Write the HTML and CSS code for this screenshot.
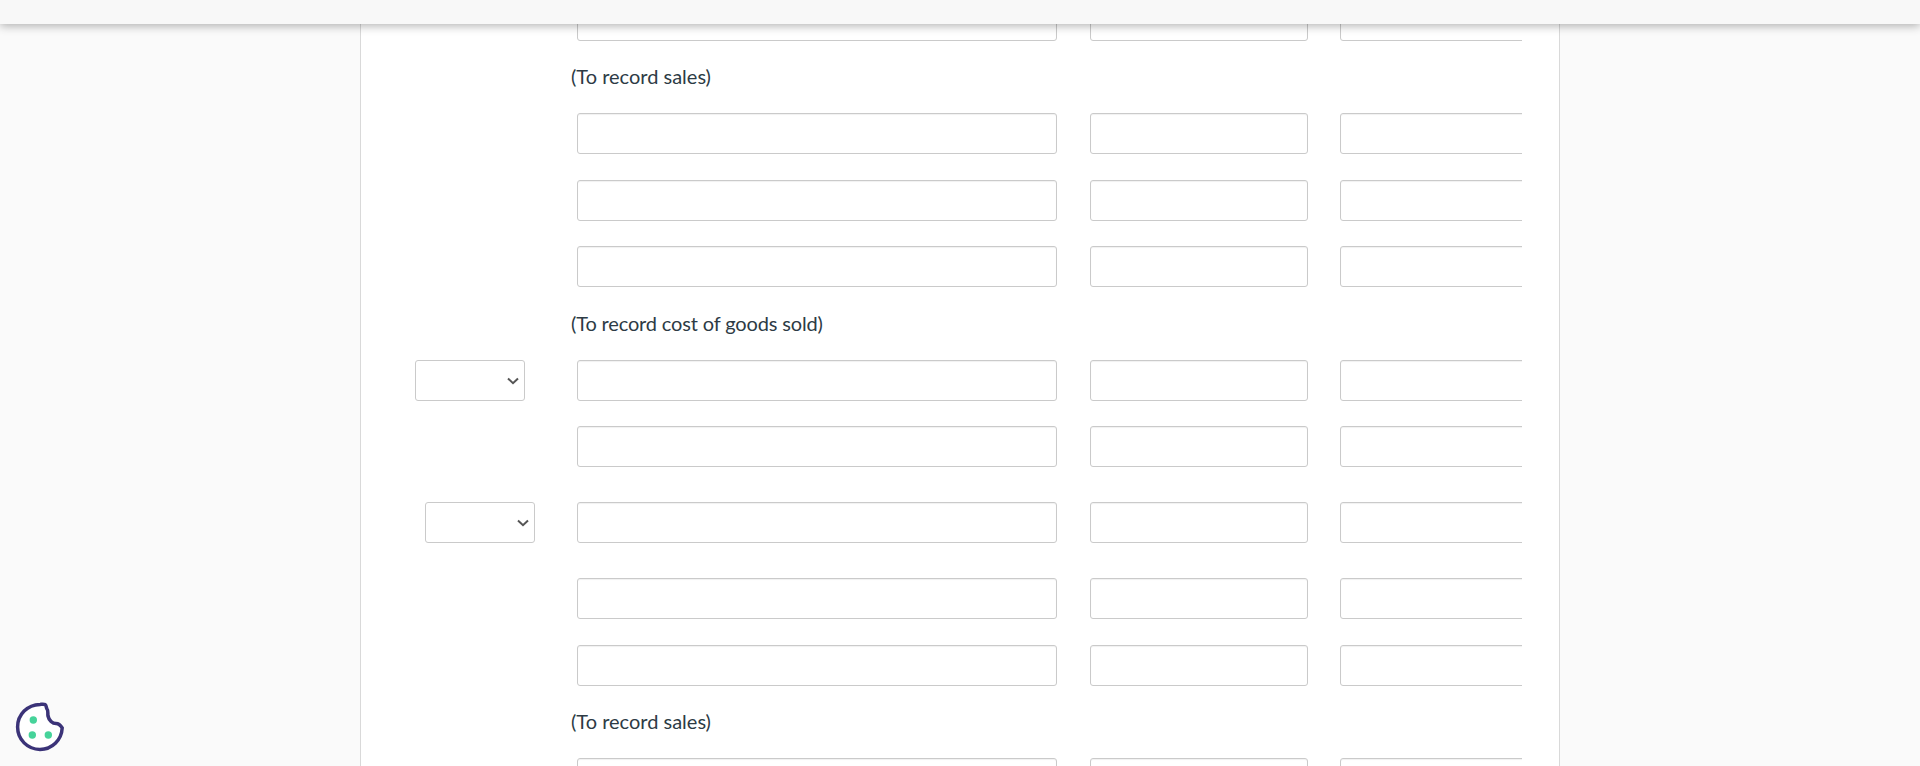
FILE: index.html
```html
<!DOCTYPE html>
<html lang="en">
  <head>
    <meta charset="UTF-8" />
    <title>Journal entries</title>
    <link rel="stylesheet" href="styles.css">
  </head>
  <body>
    <header class="topbar"></header>

    <main class="card">
      <div class="entries">
        <div class="row">
          <div class="col-account"></div>
          <input class="field field-name" type="text" />
          <input class="field field-debit" type="text" />
          <input class="field field-credit" type="text" />
        </div>
        <p class="note">(To record sales)</p>
        <div class="row">
          <div class="col-account"></div>
          <input class="field field-name" type="text" />
          <input class="field field-debit" type="text" />
          <input class="field field-credit" type="text" />
        </div>
        <div class="row gap-wide">
          <div class="col-account"></div>
          <input class="field field-name" type="text" />
          <input class="field field-debit" type="text" />
          <input class="field field-credit" type="text" />
        </div>
        <div class="row gap-narrow">
          <div class="col-account"></div>
          <input class="field field-name" type="text" />
          <input class="field field-debit" type="text" />
          <input class="field field-credit" type="text" />
        </div>
        <p class="note note-tall">(To record cost of goods sold)</p>
        <div class="row">
          <div class="col-account"><select class="pick"></select></div>
          <input class="field field-name" type="text" />
          <input class="field field-debit" type="text" />
          <input class="field field-credit" type="text" />
        </div>
        <div class="row gap-narrow">
          <div class="col-account"></div>
          <input class="field field-name" type="text" />
          <input class="field field-debit" type="text" />
          <input class="field field-credit" type="text" />
        </div>
        <div class="row gap-large">
          <div class="col-account col-indent"><select class="pick"></select></div>
          <input class="field field-name" type="text" />
          <input class="field field-debit" type="text" />
          <input class="field field-credit" type="text" />
        </div>
        <div class="row gap-large">
          <div class="col-account"></div>
          <input class="field field-name" type="text" />
          <input class="field field-debit" type="text" />
          <input class="field field-credit" type="text" />
        </div>
        <div class="row gap-wide">
          <div class="col-account"></div>
          <input class="field field-name" type="text" />
          <input class="field field-debit" type="text" />
          <input class="field field-credit" type="text" />
        </div>
        <p class="note">(To record sales)</p>
        <div class="row">
          <div class="col-account"></div>
          <input class="field field-name" type="text" />
          <input class="field field-debit" type="text" />
          <input class="field field-credit" type="text" />
        </div>
      </div>
    </main>

    <button class="cookie" type="button" aria-label="Cookie settings">
      <svg width="52" height="52" viewBox="0 0 52 52">
        <path class="cookie-edge" d="M26 3.4 C28 3.3 30 3 31.2 3.6 C32.5 4.5 32 6.5 33 8 C34.5 10 33.5 12 34 15 C35 19.5 38.5 22.5 42 22.5 C45 22.5 47 25 48.2 27 C47.6 39 38 48.4 26 48.4 C13.5 48.4 3.6 38.5 3.6 26 C3.6 13.5 13.5 3.6 26 3.4 Z" />
        <circle class="cookie-dot" cx="19.3" cy="19" r="3.7" />
        <circle class="cookie-dot" cx="18.3" cy="34" r="3.7" />
        <circle class="cookie-dot" cx="34.3" cy="34" r="3.7" />
      </svg>
    </button>
  </body>
</html>
```

FILE: styles.css
```css
html,
body {
  height: 100%;
}

body {
  margin: 0;
  overflow: hidden;
  background-color: #fafafa;
  font-family: "Lato", "Liberation Sans", sans-serif;
  color: #2d3b45;
}

.topbar {
  position: fixed;
  top: 0;
  left: 0;
  right: 0;
  height: 24px;
  background-color: #f8f8f8;
  box-shadow: 0 2px 10px rgba(0, 0, 0, 0.3);
  z-index: 10;
}

.card {
  box-sizing: border-box;
  width: 1200px;
  height: 100%;
  margin-left: 360px;
  background-color: #fff;
  border-left: 1px solid #d9d9d9;
  border-right: 1px solid #d9d9d9;
  overflow: hidden;
}

.entries {
  width: 1161px;
  overflow: hidden;
}

.row {
  display: flex;
  height: 41px;
}

.col-account {
  flex: none;
  display: flex;
  justify-content: flex-end;
  box-sizing: border-box;
  width: 216px;
  padding-right: 52px;
}

.col-indent {
  padding-right: 42px;
}

.field,
.pick {
  flex: none;
  box-sizing: border-box;
  height: 41px;
  border: 1px solid #cacaca;
  border-radius: 3px;
  background-color: #fff;
}

.field {
  box-shadow: inset 0 1px 1px rgba(0, 0, 0, 0.06);
}

.field-name {
  width: 480px;
}

.field-debit {
  width: 218px;
  margin-left: 33px;
}

.field-credit {
  width: 240px;
  margin-left: 32px;
}

.pick {
  width: 110px;
  appearance: none;
  background-image: url("data:image/svg+xml,%3Csvg xmlns='http://www.w3.org/2000/svg' width='12' height='8' viewBox='0 0 12 8'%3E%3Cpath d='M1 1.5 L6 6.2 L11 1.5' fill='none' stroke='%23555' stroke-width='2'/%3E%3C/svg%3E");
  background-repeat: no-repeat;
  background-position: right 5px center;
}

.note {
  margin: 0;
  padding: 20px 0 22px 210px;
  font-size: 20px;
  line-height: 30px;
}

.note-tall {
  padding-top: 21px;
  letter-spacing: -0.15px;
}

.gap-narrow {
  margin-top: 25px;
}

.gap-wide {
  margin-top: 26px;
}

.gap-large {
  margin-top: 35px;
}

.cookie {
  position: fixed;
  left: 14px;
  bottom: 13px;
  width: 52px;
  height: 52px;
  padding: 0;
  border: 0;
  background: none;
}

.cookie-edge {
  fill: #fff;
  stroke: #3b3378;
  stroke-width: 3.5;
}

.cookie-dot {
  fill: #46d39a;
}
```
